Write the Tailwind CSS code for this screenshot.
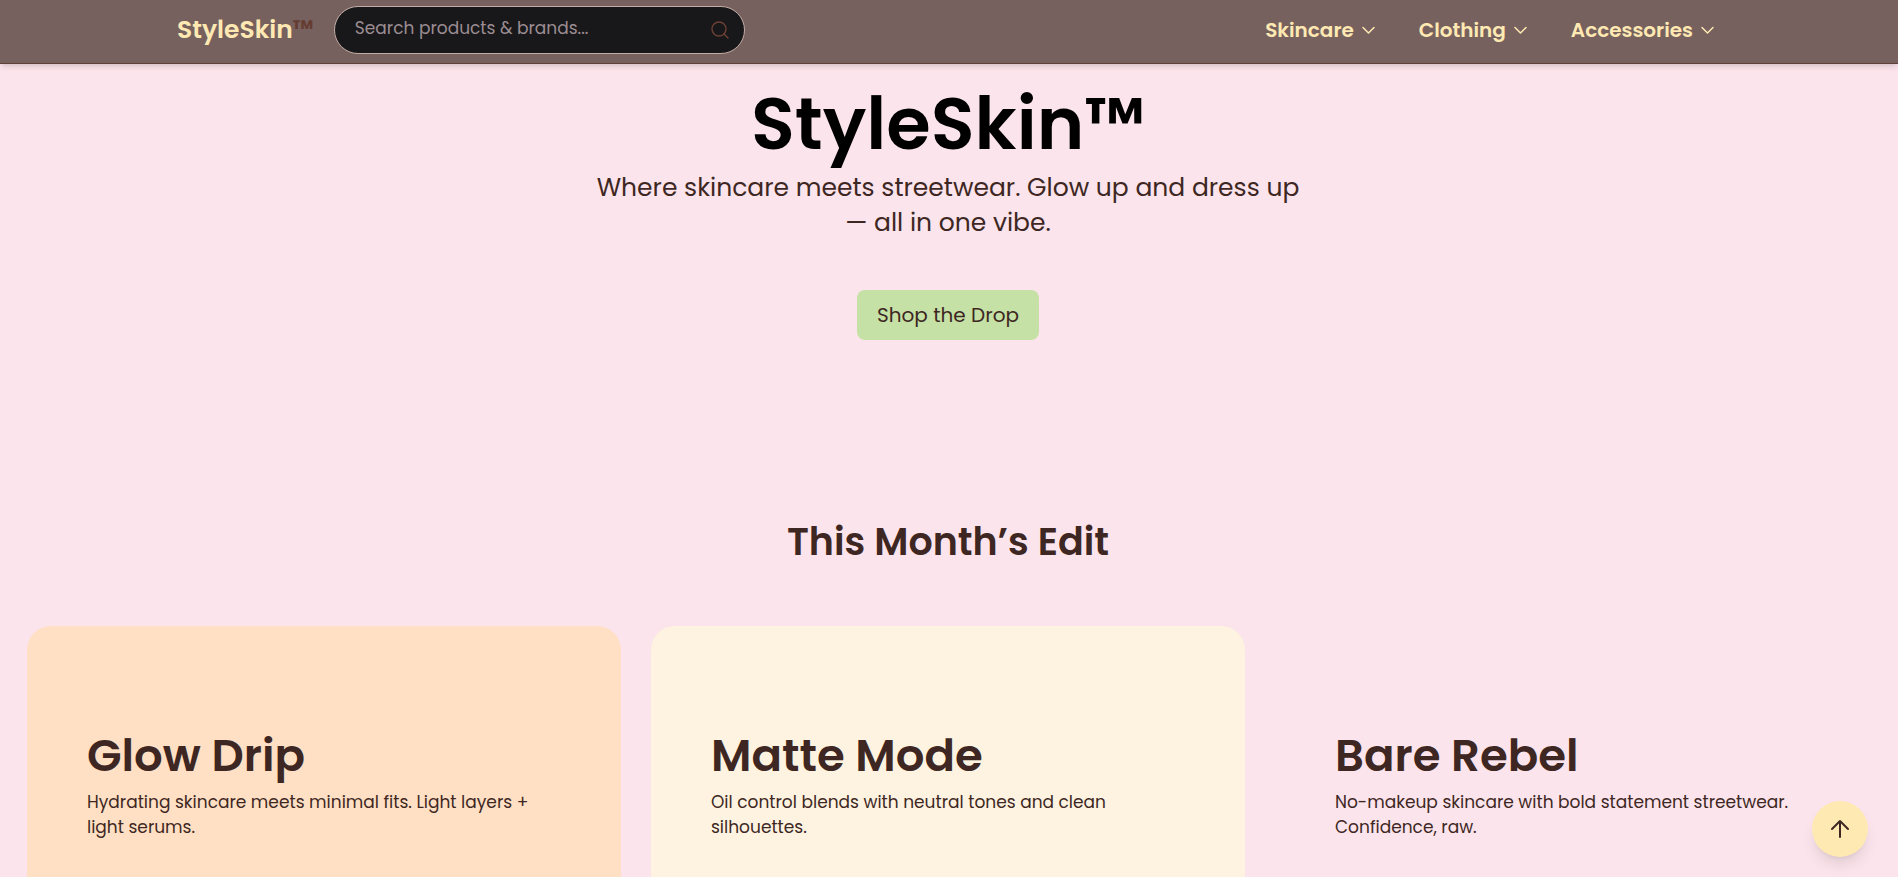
<!DOCTYPE html>
<html lang="en">
<head>
    <meta charset="UTF-8">
    <meta name="viewport" content="width=device-width, initial-scale=1.0">
    <title>StyleSkin™</title>
    <script src="https://cdn.jsdelivr.net/npm/@tailwindcss/browser@4"></script>
</head>
<body class="bg-[#fbe4eb] text-[#3e2723] font-[Poppins,Inter,sans-serif] h-screen overflow-hidden">

    <!-- navbar -->
    <header class="h-16 bg-[#77615f] border-b border-[#5d4037] shadow-md">
        <div class="max-w-[1544px] h-full mx-auto flex items-center justify-between pb-1">
            <div class="flex items-center gap-5">
                <a href="#" class="text-[25px] font-semibold text-[#ffe9b3]">StyleSkin<span class="text-[#653c32]">™</span></a>
                <form class="relative w-[411px]">
                    <input type="text" aria-label="Search products and brands" placeholder="Search products &amp; brands..." class="w-full h-12 pl-5 pr-12 pb-1 rounded-full bg-[#18181a] border border-[#c3aca4] text-[17px] text-white placeholder:text-[#9c8d92] outline-none">
                    <button type="submit" aria-label="Search" class="absolute right-4 top-3.5 text-[#6d4034]">
                        <svg class="size-5" viewBox="0 0 20 20" fill="none" stroke="currentColor" stroke-width="1.4" stroke-linecap="round"><circle cx="10" cy="9" r="7"/><path d="M15 14l4 4"/></svg>
                    </button>
                </form>
            </div>
            <nav class="flex items-center gap-[41px] pr-1 text-xl font-semibold text-[#ffe9b3]">
                <button class="flex items-center gap-1">Skincare
                    <svg class="size-5" viewBox="0 0 20 20" fill="none" stroke="currentColor" stroke-width="1.5" stroke-linecap="round" stroke-linejoin="round"><path d="M5 7.500l5.500 5.500 5.500-5.500"/></svg>
                </button>
                <button class="flex items-center gap-1">Clothing
                    <svg class="size-5" viewBox="0 0 20 20" fill="none" stroke="currentColor" stroke-width="1.5" stroke-linecap="round" stroke-linejoin="round"><path d="M5 7.500l5.500 5.500 5.500-5.500"/></svg>
                </button>
                <button class="flex items-center gap-1">Accessories
                    <svg class="size-5" viewBox="0 0 20 20" fill="none" stroke="currentColor" stroke-width="1.5" stroke-linecap="round" stroke-linejoin="round"><path d="M5 7.500l5.500 5.500 5.500-5.500"/></svg>
                </button>
            </nav>
        </div>
    </header>

    <main class="pr-0.5">
        <!-- hero -->
        <section class="flex flex-col items-center text-center pt-5">
            <h1 class="text-7xl leading-20 font-semibold text-black">StyleSkin™</h1>
            <p class="mt-1.5 max-w-[720px] text-[25px] leading-[35px]">Where skincare meets streetwear. Glow up and dress up — all in one vibe.</p>
            <button class="mt-[50px] h-[50px] px-5 rounded-lg bg-[#c5e1a5] text-xl">Shop the Drop</button>
        </section>

        <!-- monthly edit -->
        <section class="pt-[178px] px-[27px]">
            <h2 class="text-center text-[38px] leading-12 font-semibold">This Month’s Edit</h2>
            <div class="mt-15 grid grid-cols-3 gap-[30px]">
                <article class="h-[420px] px-15 pt-25 rounded-3xl bg-[#ffe0c4]">
                    <h3 class="text-[45px] leading-15 font-semibold">Glow Drip</h3>
                    <p class="mt-1 text-[17px] leading-[25px]">Hydrating skincare meets minimal fits. Light layers + light serums.</p>
                </article>
                <article class="h-[420px] px-15 pt-25 rounded-3xl bg-[#fdf3e0]">
                    <h3 class="text-[45px] leading-15 font-semibold">Matte Mode</h3>
                    <p class="mt-1 text-[17px] leading-[25px]">Oil control blends with neutral tones and clean silhouettes.</p>
                </article>
                <article class="h-[420px] px-15 pt-25 rounded-3xl bg-[#fbe4eb]">
                    <h3 class="text-[45px] leading-15 font-semibold">Bare Rebel</h3>
                    <p class="mt-1 text-[17px] leading-[25px]">No-makeup skincare with bold statement streetwear. Confidence, raw.</p>
                </article>
            </div>
        </section>
    </main>

    <!-- back to top -->
    <button aria-label="Back to top" class="fixed right-[30px] bottom-5 size-14 rounded-full bg-[#ffe9b3] shadow-lg flex items-center justify-center">
        <svg class="size-6" viewBox="0 0 24 24" fill="none" stroke="currentColor" stroke-width="2" stroke-linecap="round" stroke-linejoin="round"><path d="M12 20V4M4 12l8-8 8 8"/></svg>
    </button>
</body>
</html>
